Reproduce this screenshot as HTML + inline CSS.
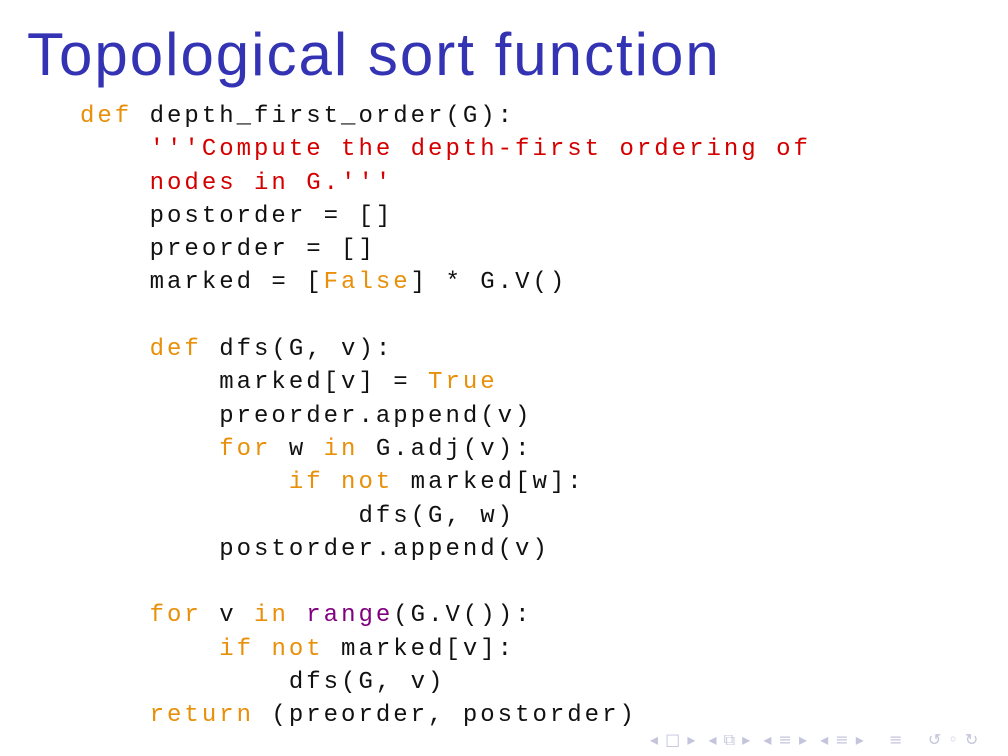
<!DOCTYPE html>
<html><head><meta charset="utf-8"><style>
html,body{margin:0;padding:0;background:#fff;}
body{width:1008px;height:756px;position:relative;overflow:hidden;}
h1{position:absolute;left:27px;top:22px;margin:0;font:normal 60px/66px "Liberation Sans",sans-serif;color:#3333b3;letter-spacing:2px;}
pre{position:absolute;left:80px;top:100px;margin:0;font:24px/33.3px "Liberation Mono",monospace;letter-spacing:3px;color:#111;}
.k{color:#e8900a}.s{color:#d40000}.p{color:#80007f}
.nav{position:absolute;left:650px;top:730px;font:16px "DejaVu Sans",sans-serif;color:#c4c4dc;white-space:pre;letter-spacing:1px;}
</style></head><body>
<h1>Topological sort function</h1>
<pre><span class="k">def</span> depth_first_order(G):
    <span class="s">'''Compute the depth-first ordering of</span>
<span class="s">    nodes in G.'''</span>
    postorder = []
    preorder = []
    marked = [<span class="k">False</span>] * G.V()

    <span class="k">def</span> dfs(G, v):
        marked[v] = <span class="k">True</span>
        preorder.append(v)
        <span class="k">for</span> w <span class="k">in</span> G.adj(v):
            <span class="k">if</span> <span class="k">not</span> marked[w]:
                dfs(G, w)
        postorder.append(v)

    <span class="k">for</span> v <span class="k">in</span> <span class="p">range</span>(G.V()):
        <span class="k">if</span> <span class="k">not</span> marked[v]:
            dfs(G, v)
    <span class="k">return</span> (preorder, postorder)</pre>
<div class="nav">◂ □ ▸  ◂ ⧉ ▸  ◂ ≡ ▸  ◂ ≡ ▸    ≡    ↺ ◦ ↻</div>
</body></html>
